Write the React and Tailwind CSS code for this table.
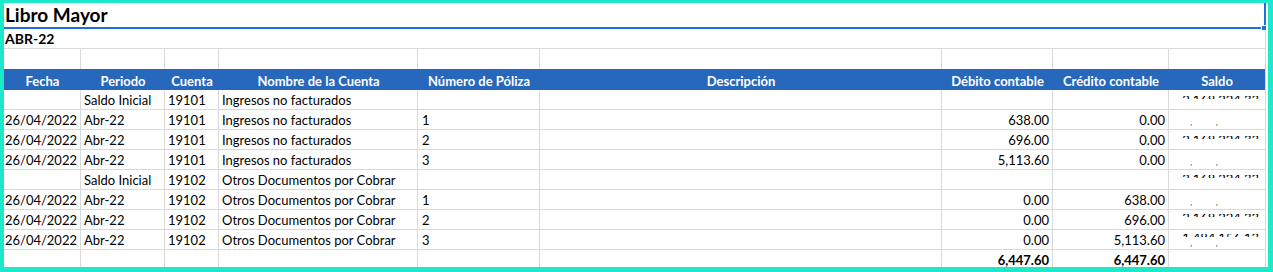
import React from 'react';

const cols = 'grid grid-cols-[77px_84px_54px_199px_122px_402px_111px_116px_97px]';
const font = { fontFamily: 'Lato, "Liberation Sans", sans-serif' };

const headers = [
  'Fecha',
  'Periodo',
  'Cuenta',
  'Nombre de la Cuenta',
  'Número de Póliza',
  'Descripción',
  'Débito contable',
  'Crédito contable',
  'Saldo',
];

// saldo column only shows thin slivers of the numbers
const rows = [
  { fecha: '', periodo: 'Saldo Inicial', cuenta: '19101', nombre: 'Ingresos no facturados', poliza: '', debito: '', credito: '', saldo: [{ kind: 'top', pad: 'pt-[6px]', val: '2,168,224.33' }] },
  { fecha: '26/04/2022', periodo: 'Abr-22', cuenta: '19101', nombre: 'Ingresos no facturados', poliza: '1', debito: '638.00', credito: '0.00', saldo: [{ kind: 'low', pad: 'pt-[14px]', val: '2,168,224.33' }] },
  { fecha: '26/04/2022', periodo: 'Abr-22', cuenta: '19101', nombre: 'Ingresos no facturados', poliza: '2', debito: '696.00', credito: '0.00', saldo: [{ kind: 'top', pad: 'pt-[6px]', val: '2,168,224.33' }] },
  { fecha: '26/04/2022', periodo: 'Abr-22', cuenta: '19101', nombre: 'Ingresos no facturados', poliza: '3', debito: '5,113.60', credito: '0.00', saldo: [{ kind: 'low', pad: 'pt-[14px]', val: '2,168,224.33' }] },
  { fecha: '', periodo: 'Saldo Inicial', cuenta: '19102', nombre: 'Otros Documentos por Cobrar', poliza: '', debito: '', credito: '', saldo: [{ kind: 'top', pad: 'pt-[5px]', val: '2,168,224.33' }] },
  { fecha: '26/04/2022', periodo: 'Abr-22', cuenta: '19102', nombre: 'Otros Documentos por Cobrar', poliza: '1', debito: '0.00', credito: '638.00', saldo: [{ kind: 'low', pad: 'pt-[14px]', val: '2,168,224.33' }] },
  { fecha: '26/04/2022', periodo: 'Abr-22', cuenta: '19102', nombre: 'Otros Documentos por Cobrar', poliza: '2', debito: '0.00', credito: '696.00', saldo: [{ kind: 'top', pad: 'pt-[4px]', val: '2,168,224.33' }] },
  { fecha: '26/04/2022', periodo: 'Abr-22', cuenta: '19102', nombre: 'Otros Documentos por Cobrar', poliza: '3', debito: '0.00', credito: '5,113.60', saldo: [{ kind: 'top', pad: 'pt-[4px]', val: '1,484,156.13' }, { kind: 'low', pad: 'pt-[8px]', val: '1,484,156.13' }] },
];

const Sliver = ({ kind, pad, val }) => (
  <div className={pad}>
    <div className="h-[3px] overflow-hidden text-right pr-[6px]">
      <div className={kind === 'top' ? 'leading-[13px] -mt-[2px]' : 'leading-[13px] -mt-[11px]'}>{val}</div>
    </div>
  </div>
);

const cell = 'h-[20px] border-r border-b border-[#dadada] pt-[1px] leading-[18px] whitespace-nowrap overflow-hidden';

export default function App() {
  return (
    <div
      className="w-[1273px] h-[272px] overflow-hidden bg-white border-[#1de8c9] border-l-4 border-t-[3px] border-r-[5px] border-b-[5px] text-[13px] text-black"
      style={font}
    >
      {/* title, selected merged cell */}
      <div className="relative w-[1262px] h-[26px] border-r-2 border-b-2 border-[#1f6fe0]">
        <div className="pl-[1px] leading-[24px] text-[19px] font-bold">Libro Mayor</div>
        <div className="absolute -right-[3px] -bottom-[4px] w-[6px] h-[6px] bg-[#1f6fe0] border border-white" />
      </div>
      <div className="w-[1262px] h-[20px] border-b border-r border-[#dadada] pl-[1px] leading-[19px] text-[14px] font-bold">ABR-22</div>

      {/* empty spacer row */}
      <div className={cols}>
        {headers.map((h) => (
          <div key={h} className="h-[20px] border-r border-[#dadada]" />
        ))}
      </div>

      {/* header */}
      <div className={cols}>
        {headers.map((h, i) => (
          <div
            key={h}
            className={
              'h-[21px] bg-[#2868bc] text-white font-bold text-center pt-[3px] leading-[18px] whitespace-nowrap ' +
              (i === headers.length - 1 ? 'border-r border-[#dadada]' : '')
            }
          >
            {h}
          </div>
        ))}
      </div>

      {rows.map((r, idx) => (
        <div key={idx} className={cols}>
          <div className={cell + ' text-right pr-[3px]'}>{r.fecha}</div>
          <div className={cell + ' pl-[3px]'}>{r.periodo}</div>
          <div className={cell + ' pl-[3px]'}>{r.cuenta}</div>
          <div className={cell + ' pl-[3px]'}>{r.nombre}</div>
          <div className={cell + ' pl-[4px]'}>{r.poliza}</div>
          <div className={cell} />
          <div className={cell + ' text-right pr-[3px]'}>{r.debito}</div>
          <div className={cell + ' text-right pr-[3px]'}>{r.credito}</div>
          <div className="h-[20px] border-r border-b border-[#dadada] overflow-hidden">
            {r.saldo.map((s, j) => (
              <Sliver key={j} {...s} />
            ))}
          </div>
        </div>
      ))}

      {/* totals */}
      <div className={cols}>
        <div className={cell} />
        <div className={cell} />
        <div className={cell} />
        <div className={cell} />
        <div className={cell} />
        <div className={cell} />
        <div className={cell + ' text-right pr-[3px] font-bold'}>6,447.60</div>
        <div className={cell + ' text-right pr-[3px] font-bold'}>6,447.60</div>
        <div className={cell} />
      </div>
    </div>
  );
}
